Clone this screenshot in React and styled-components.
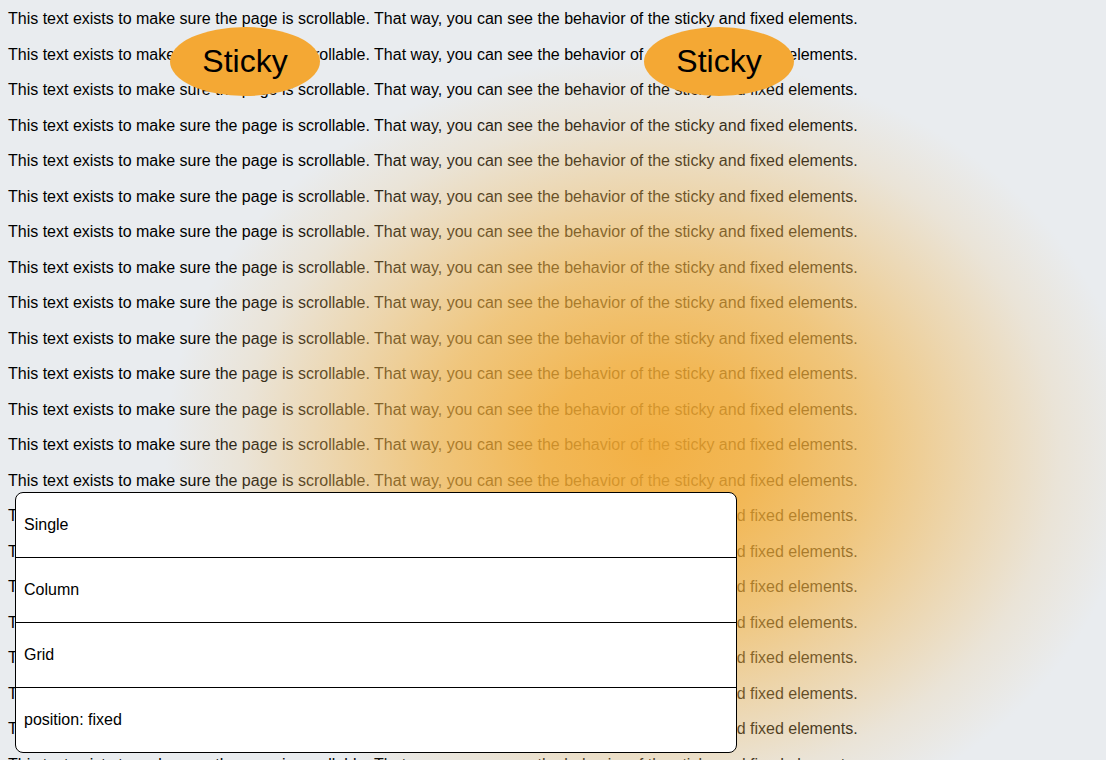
import React from 'react';
import styled, { createGlobalStyle } from 'styled-components';

const GlobalStyle = createGlobalStyle`
    html, body {
        margin: 0;
        padding: 0;
        height: 760px;
        overflow: hidden;
        background-color: #E9ECEF;
    }
`

const Page = styled.div`
    position: relative;
    height: 760px;
    overflow: hidden;
    padding: 9px 8px 0 8px;
    box-sizing: border-box;
    font-family: "Liberation Sans", Arial, sans-serif;
    display: flex;
    flex-direction: column;
    gap: 16px;
`
const Line = styled.p`
    margin: 0;
    font-size: 16px;
    line-height: 19.5px;
    color: #000;
    white-space: nowrap;
`
// glow that lies over the text
const Glow = styled.div`
    position: absolute;
    left: 165px;
    top: 55px;
    width: 990px;
    height: 810px;
    background: radial-gradient(
        closest-side at 49% 49%,
        rgba(244, 170, 50, 0.9) 0%,
        rgba(244, 172, 52, 0.82) 22%,
        rgba(243, 178, 66, 0.66) 45%,
        rgba(241, 186, 92, 0.44) 66%,
        rgba(238, 198, 130, 0.22) 84%,
        rgba(233, 236, 239, 0) 100%
    );
    pointer-events: none;
    z-index: 1;
`
const Sticky = styled.div`
    position: absolute;
    top: 27px;
    left: ${props => props.left}px;
    width: 150px;
    height: 69px;
    border-radius: 50%;
    background-color: #F4A834;
    display: flex;
    align-items: center;
    justify-content: center;
    font-size: 32px;
    color: #000;
    z-index: 2;
`
// fixed panel
const Panel = styled.div`
    position: absolute;
    left: 15px;
    top: 492px;
    width: 720px;
    border: 1px solid #000;
    border-radius: 8px;
    background-color: #fff;
    overflow: hidden;
    display: flex;
    flex-direction: column;
    z-index: 3;
`
const Row = styled.div`
    height: 64px;
    display: flex;
    align-items: center;
    padding-left: 8px;
    font-size: 16px;
    color: #000;
    border-top: ${props => props.first ? 'none' : '1px solid #000'};
`

const App = () => {
    const lines = [];
    for (let i = 0; i < 24; i++) {
        lines.push(
            <Line key={i}>This text exists to make sure the page is scrollable. That way, you can see the behavior of the sticky and fixed elements.</Line>
        );
    }

    return (
        <Page>
            <GlobalStyle />
            {lines}
            <Glow />
            <Sticky left={170}>Sticky</Sticky>
            <Sticky left={644}>Sticky</Sticky>
            <Panel>
                <Row first>Single</Row>
                <Row>Column</Row>
                <Row>Grid</Row>
                <Row>position: fixed</Row>
            </Panel>
        </Page>
    )
}

export default App;
